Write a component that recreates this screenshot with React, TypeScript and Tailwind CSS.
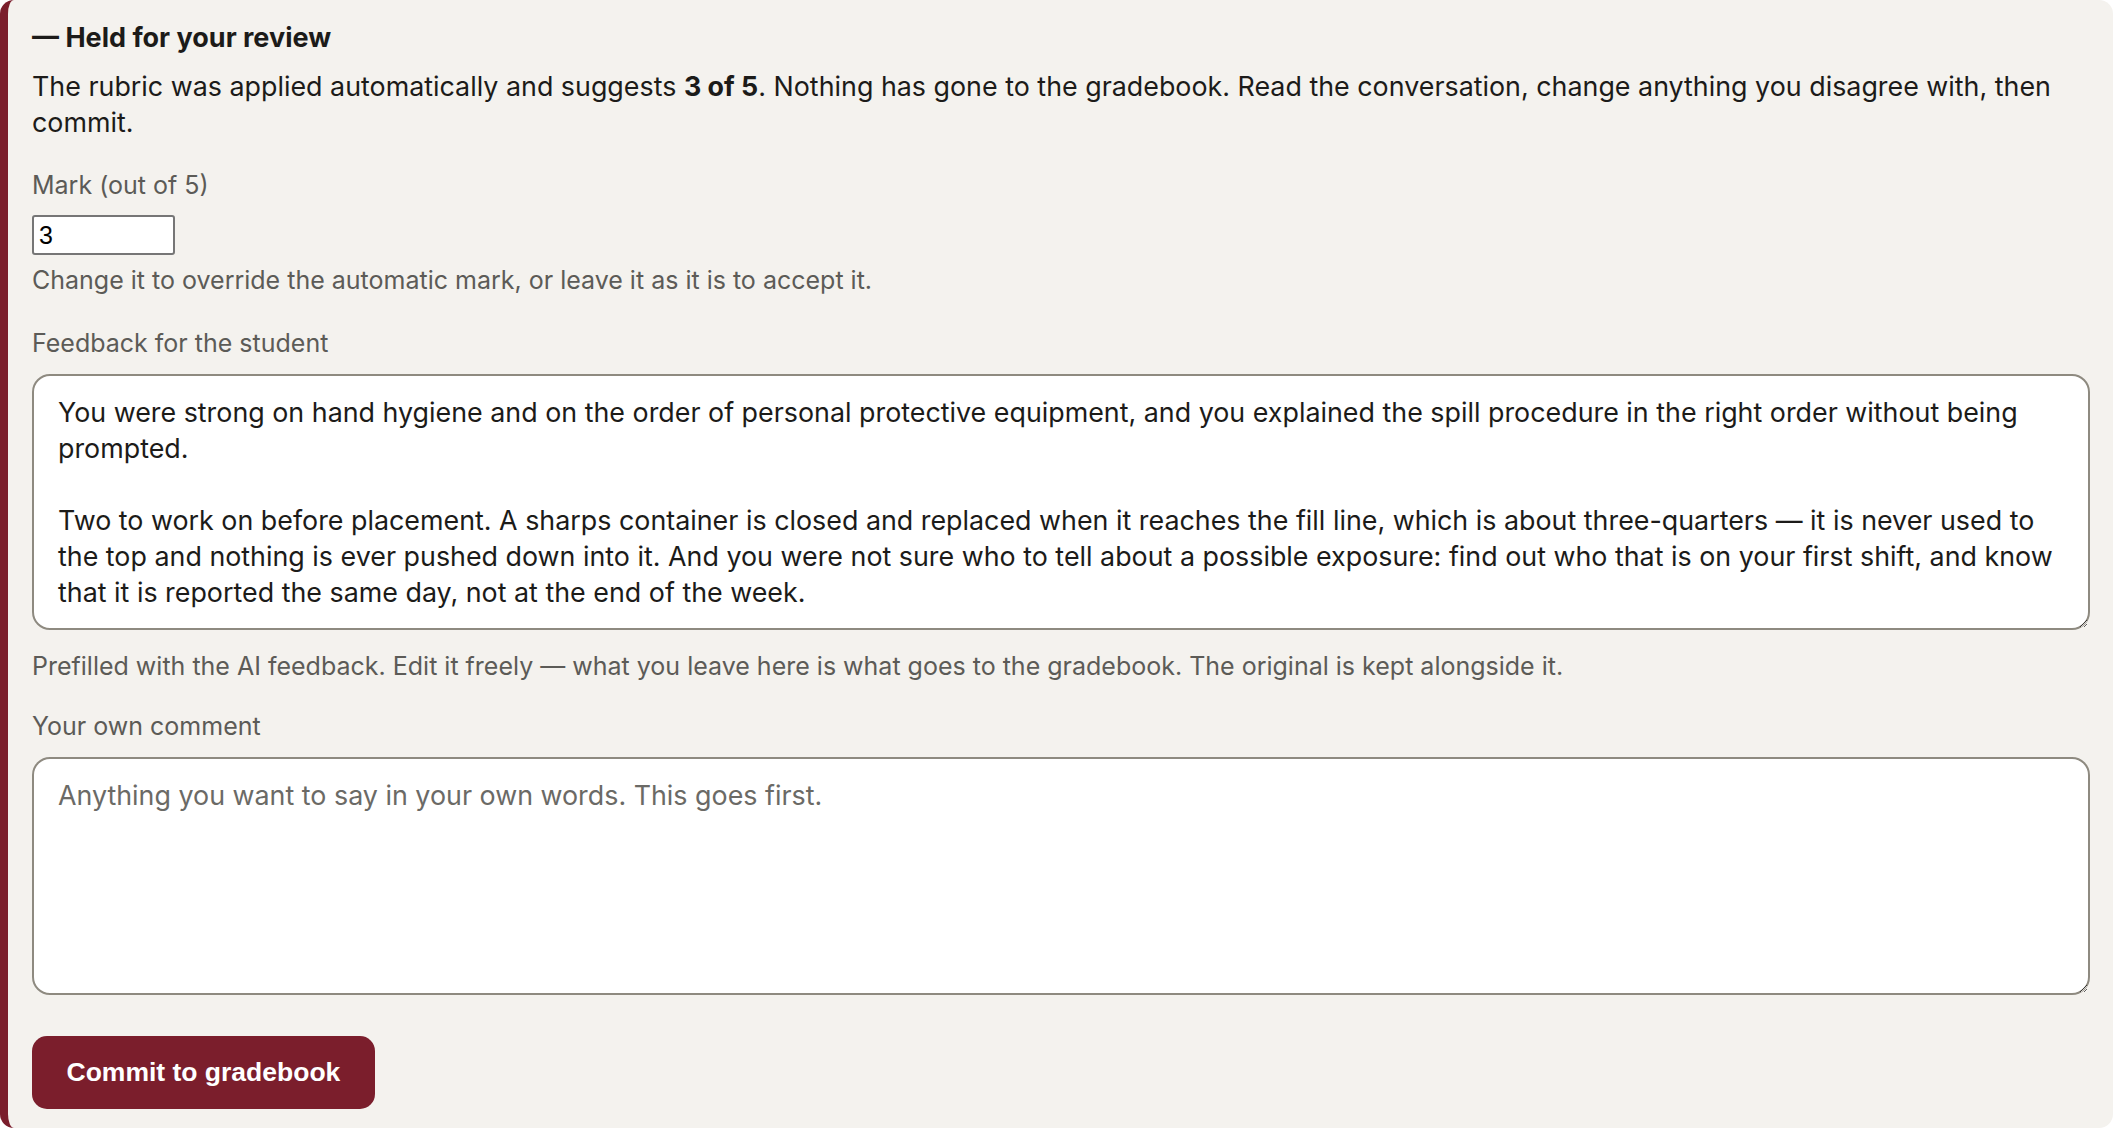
const feedback =
  'You were strong on hand hygiene and on the order of personal protective equipment, and you explained the spill procedure in the right order without being prompted.\n\nTwo to work on before placement. A sharps container is closed and replaced when it reaches the fill line, which is about three-quarters — it is never used to the top and nothing is ever pushed down into it. And you were not sure who to tell about a possible exposure: find out who that is on your first shift, and know that it is reported the same day, not at the end of the week.';

function App() {
  return (
    <div className="min-h-screen bg-white font-['Inter',sans-serif] text-[#1c1b19]">
      {/* Review card */}
      <section className="w-[2113px] rounded-[14px] border-l-[8px] border-[#7b1e2c] bg-[#f4f2ee] pt-[20px] pr-[23px] pb-[19px] pl-[24px] flex flex-col items-start">
        <h3 className="text-[27px] leading-[36px] font-bold">— Held for your review</h3>
        <p className="mt-[12px] text-[26.85px] leading-[36px]">
          The rubric was applied automatically and suggests <strong className="font-bold">3 of 5</strong>. Nothing has
          gone to the gradebook. Read the conversation, change anything you disagree with, then commit.
        </p>

        <label htmlFor="mark" className="mt-[28.5px] text-[25px] leading-[33px] text-[#5c5b57]">
          Mark (out of 5)
        </label>
        <input
          id="mark"
          type="text"
          defaultValue="3"
          className="mt-[13.5px] w-[143px] h-[40px] rounded-[3px] border-2 border-[#767676] bg-white pl-[5px] font-['Liberation_Sans',Arial,sans-serif] text-[25px] text-black outline-none"
        />
        <p className="mt-[8.5px] text-[25px] leading-[33px] text-[#5c5b57]">
          Change it to override the automatic mark, or leave it as it is to accept it.
        </p>

        <label htmlFor="feedback" className="mt-[30px] text-[25px] leading-[33px] text-[#5c5b57]">
          Feedback for the student
        </label>
        <textarea
          id="feedback"
          defaultValue={feedback}
          className="mt-[14.5px] block w-full h-[256px] rounded-[18px] border-2 border-[#8e8a80] bg-white pt-[18px] pb-[18px] pl-[24px] pr-[20px] text-[26.85px] leading-[36px] text-[#1c1b19] outline-none"
        />
        <p className="mt-[19.5px] text-[25px] leading-[33px] text-[#5c5b57]">
          Prefilled with the AI feedback. Edit it freely — what you leave here is what goes to the gradebook. The original
          is kept alongside it.
        </p>

        <label htmlFor="comment" className="mt-[27px] text-[25px] leading-[33px] text-[#5c5b57]">
          Your own comment
        </label>
        <textarea
          id="comment"
          placeholder="Anything you want to say in your own words. This goes first."
          className="mt-[14.5px] block w-full h-[238px] rounded-[18px] border-2 border-[#8e8a80] bg-white pt-[18px] pb-[18px] pl-[24px] pr-[20px] text-[26.85px] leading-[36px] text-[#1c1b19] placeholder:text-[#6b6a66] outline-none"
        />

        <button
          type="button"
          className="mt-[41px] h-[73px] rounded-[15px] bg-[#7b1e2c] px-[34.5px] font-['Liberation_Sans',Arial,sans-serif] text-[26.5px] font-bold text-white"
        >
          Commit to gradebook
        </button>
      </section>
    </div>
  );
}

export default App;
